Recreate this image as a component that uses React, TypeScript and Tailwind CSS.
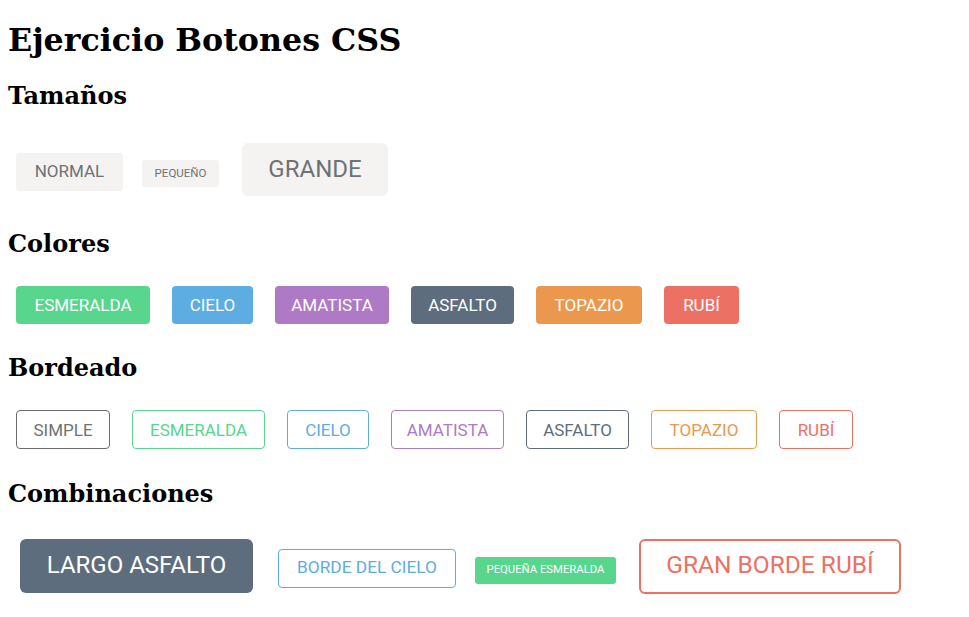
const solid: Record<string, string> = {
  esmeralda: 'bg-[#58d68d] text-white',
  cielo: 'bg-[#5dade2] text-white',
  amatista: 'bg-[#af7ac5] text-white',
  asfalto: 'bg-[#5d6d7e] text-white',
  topazio: 'bg-[#eb984e] text-white',
  rubi: 'bg-[#ec7063] text-white',
};

const outline: Record<string, string> = {
  simple: 'border border-[#6d6d6d] text-[#6e7275]',
  esmeralda: 'border border-[#58d68d] text-[#58d68d]',
  cielo: 'border border-[#5dade2] text-[#5dade2]',
  amatista: 'border border-[#af7ac5] text-[#af7ac5]',
  asfalto: 'border border-[#5d6d7e] text-[#5d6d7e]',
  topazio: 'border border-[#eb984e] text-[#eb984e]',
  rubi: 'border border-[#ec7063] text-[#ec7063]',
};

// w: ancho del botón sólido, bw: ancho del botón bordeado
const colores = [
  { key: 'esmeralda', label: 'ESMERALDA', w: 'w-[134px]', bw: 'w-[133px]' },
  { key: 'cielo', label: 'CIELO', w: 'w-[81px]', bw: 'w-[82px]' },
  { key: 'amatista', label: 'AMATISTA', w: 'w-[114px]', bw: 'w-[113px]' },
  { key: 'asfalto', label: 'ASFALTO', w: 'w-[103px]', bw: 'w-[103px]' },
  { key: 'topazio', label: 'TOPAZIO', w: 'w-[106px]', bw: 'w-[106px]' },
  { key: 'rubi', label: 'RUBÍ', w: 'w-[75px]', bw: 'w-[74px]' },
];

const bordes = [{ key: 'simple', label: 'SIMPLE', w: 'w-[94px]', bw: 'w-[94px]' }, ...colores];

function Heading({ children, className }: { children: React.ReactNode; className: string }) {
  return (
    <h2 className={`text-[24px] font-bold leading-[normal] font-['DejaVu_Serif',serif] ${className}`}>
      {children}
    </h2>
  );
}

export default function App() {
  return (
    <div className="min-h-screen bg-white px-2 pt-px text-black">
      <h1 className="mt-[20.44px] text-[31.7px] font-bold leading-[normal] font-['DejaVu_Serif',serif]">
        Ejercicio Botones CSS
      </h1>

      {/* Tamaños */}
      <Heading className="mt-[22.6px]">Tamaños</Heading>
      <div className="mt-[33.3px] flex items-baseline font-['Roboto',sans-serif]">
        <button className="ml-2 flex h-[38px] w-[107px] items-center justify-center rounded-[4px] bg-[#f4f3f1] pb-[2px] text-[17px] leading-[20px] text-[#6e7275]">
          NORMAL
        </button>
        <button className="ml-[19px] flex h-[27px] w-[77px] items-center justify-center rounded-[3px] bg-[#f4f3f1] text-[11.5px] leading-[15px] text-[#6e7275]">
          PEQUEÑO
        </button>
        <button className="ml-[23px] flex h-[53px] w-[146px] items-center justify-center rounded-[6px] bg-[#f4f3f1] text-[24px] leading-[29px] text-[#6e7275]">
          GRANDE
        </button>
      </div>

      {/* Colores */}
      <Heading className="mt-[32.4px]">Colores</Heading>
      <div className="mt-[28.4px] flex items-baseline gap-[22px] pl-2 font-['Roboto',sans-serif]">
        {colores.map((c) => (
          <button
            key={c.key}
            className={`flex h-[38px] items-center justify-center rounded-[4px] text-[17px] leading-[20px] ${c.w} ${solid[c.key]}`}
          >
            {c.label}
          </button>
        ))}
      </div>

      {/* Bordeado */}
      <Heading className="mt-[28.7px]">Bordeado</Heading>
      <div className="mt-[28.4px] flex items-baseline gap-[22px] pl-2 font-['Roboto',sans-serif]">
        {bordes.map((c) => (
          <button
            key={c.key}
            className={`flex h-[39px] items-center justify-center rounded-[4px] bg-white text-[17px] leading-[20px] ${c.bw} ${outline[c.key]}`}
          >
            {c.label}
          </button>
        ))}
      </div>

      {/* Combinaciones */}
      <Heading className="mt-[30.2px]">Combinaciones</Heading>
      <div className="mt-[30.5px] flex items-baseline font-['Roboto',sans-serif]">
        <button className="ml-3 flex h-[54px] w-[233px] items-center justify-center rounded-[6px] bg-[#5d6d7e] text-[24px] leading-[29px] text-white">
          LARGO ASFALTO
        </button>
        <button className="ml-[25px] flex h-[39px] w-[178px] items-center justify-center rounded-[4px] border border-[#5dade2] bg-white pb-[3px] text-[17.3px] leading-[20px] text-[#5dade2]">
          BORDE DEL CIELO
        </button>
        <button className="ml-[19px] flex h-[27px] w-[141px] items-center justify-center rounded-[3px] bg-[#58d68d] pb-[2px] text-[11.3px] leading-[15px] text-white">
          PEQUEÑA ESMERALDA
        </button>
        <button className="ml-[23px] flex h-[55px] w-[262px] items-center justify-center rounded-[6px] border-2 border-[#ec7063] bg-white pb-[3px] text-[24.5px] leading-[29px] text-[#ec7063]">
          GRAN BORDE RUBÍ
        </button>
      </div>
    </div>
  );
}
